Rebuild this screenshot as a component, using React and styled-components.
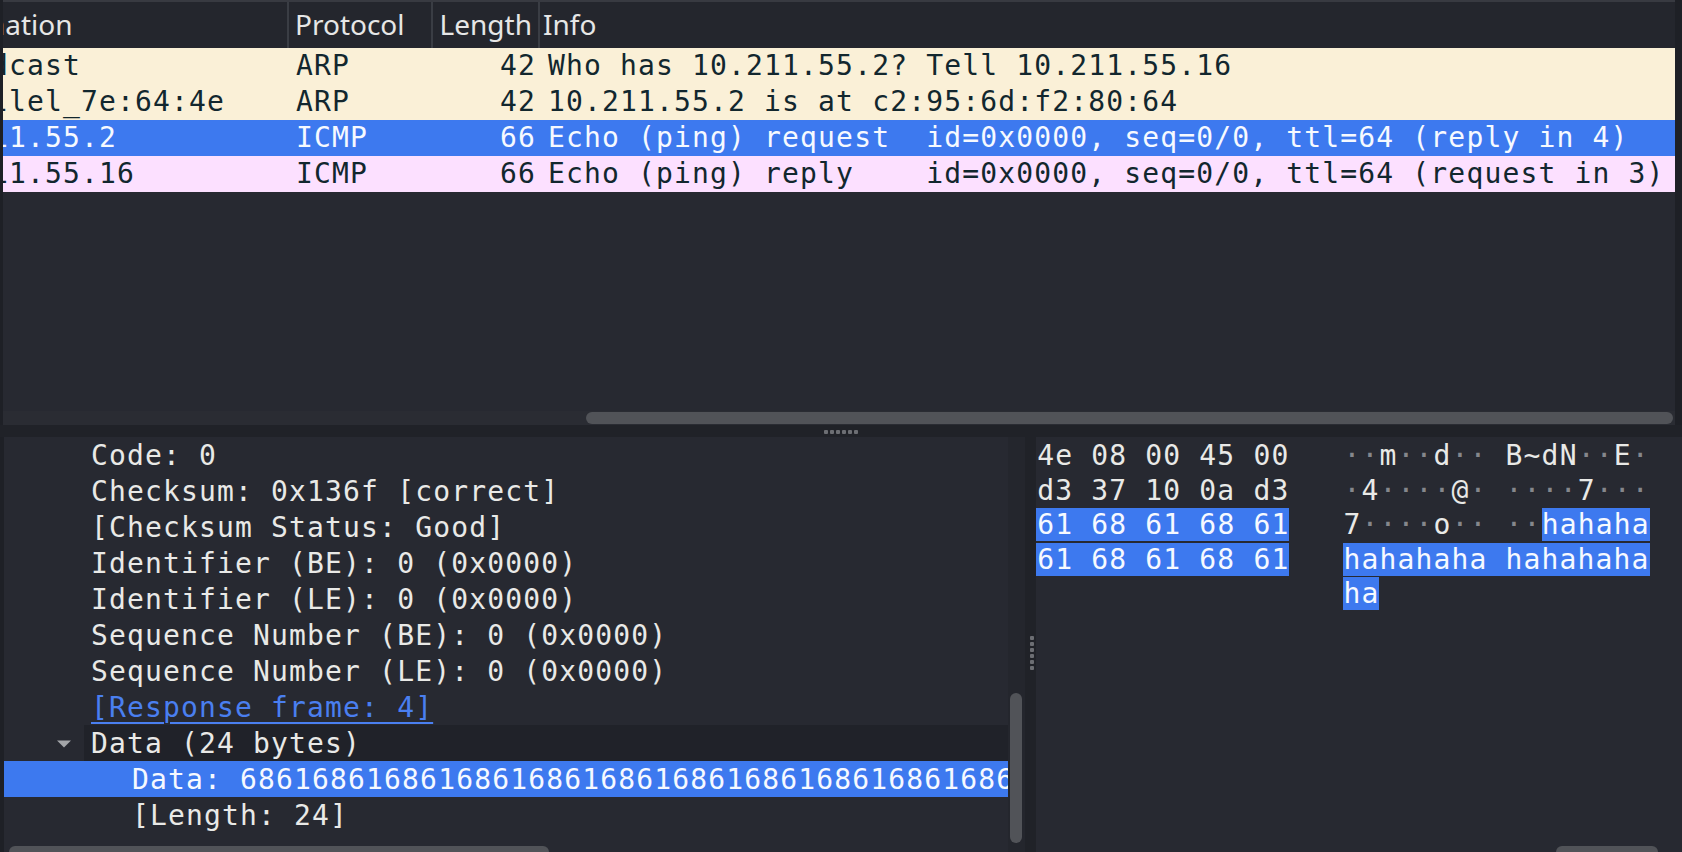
import React from 'react'
import styled, { createGlobalStyle } from 'styled-components'

const mono = `"DejaVu Sans Mono", "Liberation Mono", monospace`
const sans = `"Noto Sans", "Open Sans", sans-serif`

const GlobalStyle = createGlobalStyle`
  *, *::before, *::after { box-sizing: border-box; }
  html, body { margin: 0; padding: 0; background: #1e2026; overflow: hidden; }
  #root { width: 1682px; height: 852px; }
`

const Window = styled.div`
  width: 1682px;
  height: 852px;
  display: flex;
  flex-direction: column;
  background: #1e2026;
  overflow: hidden;
`

/* ---------- packet list ---------- */

const PacketList = styled.section`
  height: 425px;
  display: flex;
  flex-direction: column;
  border-left: 3px solid #1e2026;
  border-right: 7px solid #1e2026;
  background: #272931;
`

const ListHeader = styled.div`
  height: 48px;
  display: flex;
  background: #24262d;
  border-top: 2px solid #383a41;
  font-family: ${sans};
  font-size: 28px;
  color: #e6e6e6;
`

const HeadCell = styled.div`
  width: ${p => (p.$w ? `${p.$w}px` : 'auto')};
  flex: ${p => (p.$w ? 'none' : 1)};
  display: flex;
  align-items: center;
  justify-content: ${p => (p.$right ? 'flex-end' : 'flex-start')};
  padding: 0 ${p => p.$pr || 0}px 2px ${p => p.$pl || 0}px;
  border-left: ${p => (p.$first ? 'none' : '2px solid #3a3d44')};
  white-space: nowrap;
  overflow: hidden;
  text-indent: ${p => p.$indent || 0}px;
`

const rowColors = {
  arp: { bg: '#faf0d7', fg: '#12272e' },
  icmp: { bg: '#fce0ff', fg: '#12272e' },
  sel: { bg: '#3d79ef', fg: '#f6f9ff' },
}

const PacketRow = styled.div`
  height: 36px;
  display: flex;
  background: ${p => rowColors[p.$kind].bg};
  color: ${p => rowColors[p.$kind].fg};
  font-family: ${mono};
  font-size: 28px;
  line-height: 36px;
  letter-spacing: 1.15px;
  white-space: pre;
`

const Cell = styled.div`
  width: ${p => (p.$w ? `${p.$w}px` : 'auto')};
  flex: ${p => (p.$w ? 'none' : 1)};
  overflow: hidden;
  text-align: ${p => (p.$right ? 'right' : 'left')};
  padding: 0 ${p => p.$pr || 0}px 0 ${p => p.$pl || 0}px;
  text-indent: ${p => p.$indent || 0}px;
`

const ListSpace = styled.div`
  flex: 1;
`

const HScroll = styled.div`
  height: ${p => p.$h}px;
  flex: none;
  background: ${p => p.$track || '#2a2c33'};
  padding: ${p => p.$top}px 0 0 ${p => p.$left}px;
  overflow: hidden;
  grid-column: 1;
  grid-row: 2;
`

const HThumb = styled.div`
  width: ${p => p.$w}px;
  height: 12px;
  border-radius: 6px;
  background: #515358;
`

/* ---------- splitters ---------- */

const HSplitter = styled.div`
  height: 12px;
  flex: none;
  background: #202228;
  display: flex;
  align-items: center;
  justify-content: center;
  padding-top: 2px;
`

const VSplitter = styled.div`
  width: 11px;
  flex: none;
  background: #202228;
  display: flex;
  align-items: center;
  justify-content: center;
  padding: 16px 0 0 2px;
`

const Grip = styled.div`
  display: flex;
  flex-direction: ${p => (p.$vertical ? 'column' : 'row')};
  gap: 2px;
`

const GripDot = styled.span`
  width: 4px;
  height: 4px;
  border-radius: 1px;
  background: #6c6e73;
`

const Dots = ({ vertical }) => (
  <Grip $vertical={vertical}>
    {[0, 1, 2, 3, 4, 5].map(i => <GripDot key={i} />)}
  </Grip>
)

/* ---------- bottom panes ---------- */

const BottomRow = styled.div`
  flex: 1;
  display: flex;
  min-height: 0;
`

const DetailPane = styled.section`
  width: 1025px;
  flex: none;
  border-left: 4px solid #1e2026;
  display: grid;
  grid-template-columns: 1004px 17px;
  grid-template-rows: 1fr 9px;
  background: #272931;
`

const Tree = styled.div`
  grid-column: 1;
  grid-row: 1;
  overflow: hidden;
  font-family: ${mono};
  font-size: 28px;
  letter-spacing: 1.15px;
  color: #e9e9e7;
  white-space: pre;
`

const TreeRow = styled.div`
  height: 36px;
  display: flex;
  background: ${p => (p.$sel ? '#3d79ef' : 'transparent')};
  color: ${p => (p.$sel ? '#f6f9ff' : 'inherit')};
`

const Expander = styled.div`
  width: 80px;
  flex: none;
  display: flex;
  align-items: center;
  padding-left: 53px;
  padding-top: 2px;
`

const Label = styled.div`
  flex: 1;
  display: flex;
  align-items: center;
  padding-left: ${p => p.$indent}px;
  background: ${p => (p.$hover ? '#202229' : 'transparent')};
  overflow: hidden;
`

const Link = styled.span`
  color: #4a7ff0;
  text-decoration: underline;
  text-underline-offset: 5px;
  text-decoration-thickness: 2px;
`

const VScroll = styled.div`
  grid-column: 2;
  grid-row: 1 / 3;
  background: #24262d;
  padding: 256px 0 0 2px;
`

const VThumb = styled.div`
  width: 12px;
  height: 150px;
  border-radius: 6px;
  background: #515358;
`

const BytesPane = styled.section`
  flex: 1;
  display: grid;
  grid-template-columns: 1fr;
  grid-template-rows: 1fr 9px;
  background: #272931;
  overflow: hidden;
`

const HexView = styled.div`
  grid-column: 1;
  grid-row: 1;
  overflow: hidden;
  padding: 2px 0 0 1px;
  font-family: ${mono};
  font-size: 28px;
  letter-spacing: 1.15px;
  color: #e9e9e7;
  white-space: pre;
`

const HexLine = styled.div`
  height: 34.5px;
  line-height: 34.5px;
  margin-left: -720px;
`

const Sel = styled.span`
  background: #3d79ef;
  color: #f6f9ff;
`

const Dim = styled.span`
  color: #85878c;
`

/* ---------- data ---------- */

const packets = [
  { dst: 'Broadcast', proto: 'ARP', len: 42, info: 'Who has 10.211.55.2? Tell 10.211.55.16', kind: 'arp' },
  { dst: 'Parallel_7e:64:4e', proto: 'ARP', len: 42, info: '10.211.55.2 is at c2:95:6d:f2:80:64', kind: 'arp' },
  { dst: '10.211.55.2', proto: 'ICMP', len: 66, info: 'Echo (ping) request  id=0x0000, seq=0/0, ttl=64 (reply in 4)', kind: 'sel' },
  { dst: '10.211.55.16', proto: 'ICMP', len: 66, info: 'Echo (ping) reply    id=0x0000, seq=0/0, ttl=64 (request in 3)', kind: 'icmp' },
]

const details = [
  { text: 'Code: 0' },
  { text: 'Checksum: 0x136f [correct]' },
  { text: '[Checksum Status: Good]' },
  { text: 'Identifier (BE): 0 (0x0000)' },
  { text: 'Identifier (LE): 0 (0x0000)' },
  { text: 'Sequence Number (BE): 0 (0x0000)' },
  { text: 'Sequence Number (LE): 0 (0x0000)' },
  { text: '[Response frame: 4]', link: true },
  { text: 'Data (24 bytes)', open: true, hover: true },
  { text: 'Data: 686168616861686168616861686168616861686168616861', indent: 48, sel: true },
  { text: '[Length: 24]', indent: 48 },
]

// non-printable bytes show as a dim middle dot
const Ascii = ({ s }) =>
  s.split('').map((c, i) => (c === '·' ? <Dim key={i}>·</Dim> : c))

const Triangle = () => (
  <svg width="14" height="8" viewBox="0 0 14 8">
    <path d="M0 0.5 L14 0.5 L7 7.5 Z" fill="#a3a5a9" />
  </svg>
)

export default function App() {
  return (
    <Window>
      <GlobalStyle />

      <PacketList>
        <ListHeader>
          <HeadCell $first $w={284} $indent={-82}>Destination</HeadCell>
          <HeadCell $w={144} $pl={6}>Protocol</HeadCell>
          <HeadCell $w={107} $right $pr={6}>Length</HeadCell>
          <HeadCell $pl={3}>Info</HeadCell>
        </ListHeader>

        {packets.map(p => (
          <PacketRow key={p.dst} $kind={p.kind}>
            <Cell $w={284} $indent={-84}>{p.dst}</Cell>
            <Cell $w={144} $pl={9}>{p.proto}</Cell>
            <Cell $w={107} $right $pr={2}>{p.len}</Cell>
            <Cell $pl={10}>{p.info}</Cell>
          </PacketRow>
        ))}

        <ListSpace />
        <HScroll $h={14} $top={1} $left={583}>
          <HThumb $w={1087} />
        </HScroll>
      </PacketList>

      <HSplitter>
        <Dots />
      </HSplitter>

      <BottomRow>
        <DetailPane>
          <Tree>
            {details.map(d => (
              <TreeRow key={d.text} $sel={d.sel}>
                <Expander>{d.open && <Triangle />}</Expander>
                <Label $indent={d.indent || 7} $hover={d.hover}>
                  {d.link ? <Link>{d.text}</Link> : d.text}
                </Label>
              </TreeRow>
            ))}
          </Tree>
          <VScroll>
            <VThumb />
          </VScroll>
          <HScroll $h={9} $top={3} $left={5} $track="#272931">
            <HThumb $w={540} />
          </HScroll>
        </DetailPane>

        <VSplitter>
          <Dots vertical />
        </VSplitter>

        <BytesPane>
          <HexView>
            <HexLine>
              {'0000  c2 95 6d f2 80 64 00 1c  42 7e 64 4e 08 00 45 00   '}
              <Ascii s="··m··d·· B~dN··E·" />
            </HexLine>
            <HexLine>
              {'0010  00 34 9f 1b 00 00 40 01  c5 8e 0a d3 37 10 0a d3   '}
              <Ascii s="·4····@· ····7···" />
            </HexLine>
            <HexLine>
              {'0020  37 02 08 00 13 6f 00 00  00 00 '}
              <Sel>68 61 68 61 68 61</Sel>
              {'   '}
              <Ascii s="7····o·· ··" />
              <Sel>hahaha</Sel>
            </HexLine>
            <HexLine>
              {'0030  '}
              <Sel>68 61 68 61 68 61 68 61  68 61 68 61 68 61 68 61</Sel>
              {'   '}
              <Sel>hahahaha hahahaha</Sel>
            </HexLine>
            <HexLine>
              {'0040  '}
              <Sel>68 61</Sel>
              {' '.repeat(43) + '   '}
              <Sel>ha</Sel>
            </HexLine>
          </HexView>
          <HScroll $h={9} $top={3} $left={520} $track="#272931">
            <HThumb $w={102} />
          </HScroll>
        </BytesPane>
      </BottomRow>
    </Window>
  )
}
